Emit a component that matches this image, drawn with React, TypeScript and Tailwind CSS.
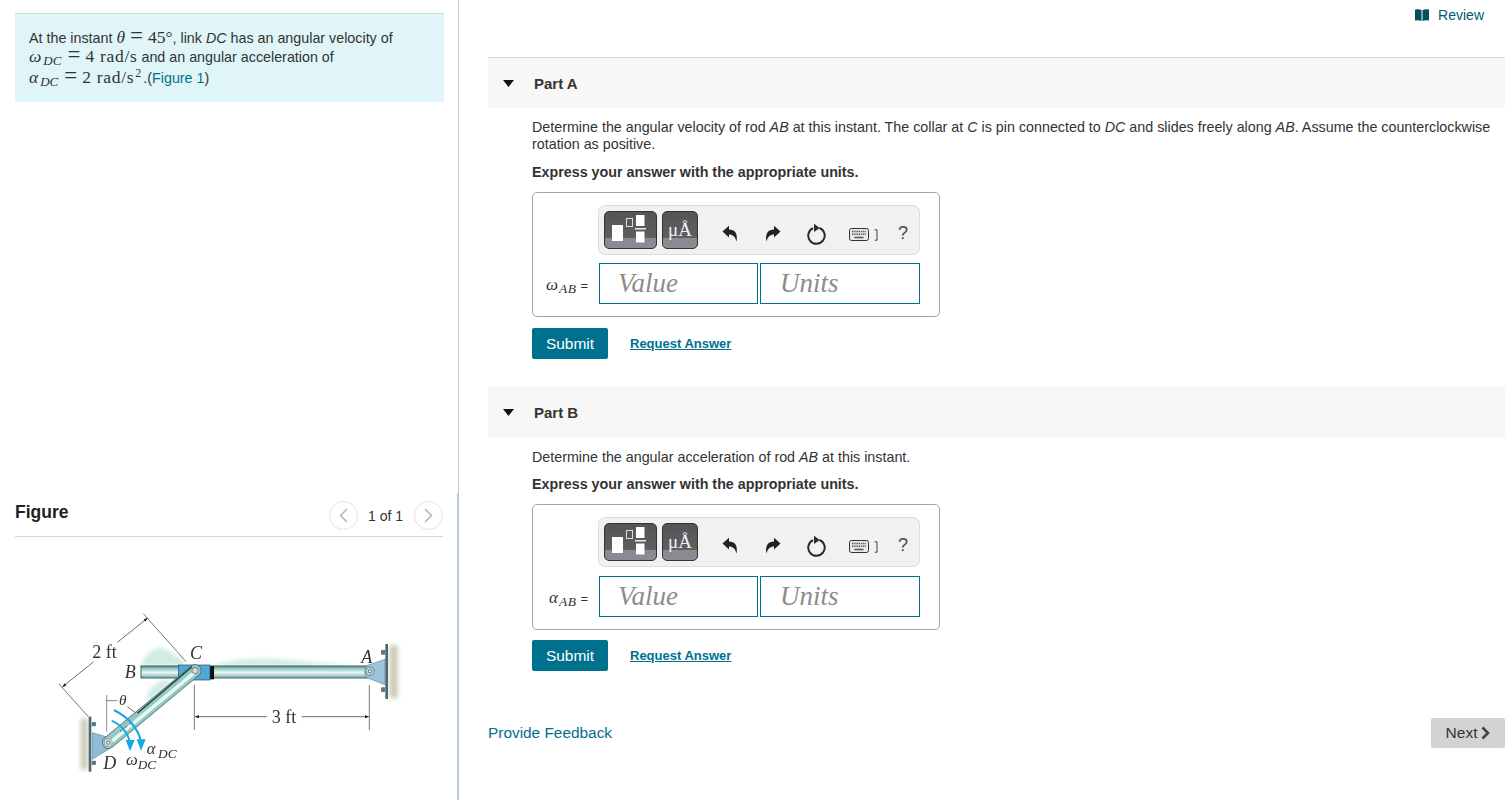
import React from "react";

const sans = "font-['Liberation_Sans',Arial,sans-serif]";
const serif = "font-['Liberation_Serif','Times_New_Roman',serif]";

function M({ children, i, tight }: { children: React.ReactNode; i?: boolean; tight?: boolean }) {
  return <span className={`${serif} text-[17.5px] text-[#333] ${i ? "italic" : tight ? "" : "tracking-[0.7px]"}`}>{children}</span>;
}
function Eq() {
  return <span className={`${serif} text-[23px] text-[#333] mx-[5px] leading-[10px]`}>=</span>;
}
function Sub({ children }: { children: React.ReactNode }) {
  return <span className={`${serif} italic text-[13px] relative top-[3px] ml-[2px] mr-[1px]`}>{children}</span>;
}

function Figure() {
  const t = "Liberation Serif, serif";
  return (
    <svg width="380" height="190" viewBox="0 0 1140 570" className="block">
      <defs>
        <filter id="b6" x="-30%" y="-30%" width="160%" height="160%"><feGaussianBlur stdDeviation="7" /></filter>
        <filter id="b2"><feGaussianBlur stdDeviation="1.5" /></filter>
        <filter id="b1"><feGaussianBlur stdDeviation="0.8" /></filter>
        <linearGradient id="rod" x1="0" y1="0" x2="0" y2="1">
          <stop offset="0" stopColor="#5b9695" />
          <stop offset="0.3" stopColor="#a8d6d3" />
          <stop offset="0.55" stopColor="#eaf6f5" />
          <stop offset="1" stopColor="#74aeab" />
        </linearGradient>
        <marker id="ah" viewBox="0 0 10 10" refX="9" refY="5" markerWidth="18" markerHeight="12" orient="auto-start-reverse" markerUnits="userSpaceOnUse">
          <path d="M0 1 L10 5 L0 9 Z" fill="#222" />
        </marker>
      </defs>
      <g filter="url(#b6)" fill="#d0ebe4">
        <path d="M300 200 Q315 160 355 142 Q400 155 435 190 L430 200 Z" />
        <path d="M510 198 Q600 168 720 178 L960 198 L510 200 Z" />
        <path d="M318 292 Q330 255 378 238 L395 250 L330 300 Z" />
      </g>
      <g filter="url(#b6)" fill="#cfccb8">
        <rect x="1048" y="135" width="26" height="160" rx="10" />
        <rect x="122" y="355" width="22" height="155" rx="10" />
      </g>
      <g filter="url(#b2)">
        <line x1="57" y1="252" x2="145" y2="350" stroke="#333" strokeWidth="2" />
        <line x1="310" y1="41" x2="438" y2="185" stroke="#333" strokeWidth="2" />
        <line x1="68" y1="260" x2="160" y2="186" stroke="#222" strokeWidth="2" markerStart="url(#ah)" />
        <line x1="232" y1="127" x2="322" y2="55" stroke="#222" strokeWidth="2" markerEnd="url(#ah)" />
        <line x1="463" y1="255" x2="463" y2="390" stroke="#333" strokeWidth="2" />
        <line x1="988" y1="255" x2="988" y2="390" stroke="#333" strokeWidth="2" />
        <line x1="466" y1="350" x2="680" y2="350" stroke="#222" strokeWidth="2" markerStart="url(#ah)" />
        <line x1="785" y1="350" x2="986" y2="350" stroke="#222" strokeWidth="2" markerEnd="url(#ah)" />
        <line x1="200" y1="285" x2="200" y2="395" stroke="#555" strokeWidth="2" />
        <line x1="200" y1="302" x2="232" y2="302" stroke="#444" strokeWidth="2" />
        <line x1="262" y1="320" x2="295" y2="345" stroke="#222" strokeWidth="2" />

        <rect x="303" y="198" width="682" height="36" fill="url(#rod)" stroke="#2b4a4a" strokeWidth="2.5" />
        <rect x="510" y="198" width="12" height="40" fill="#111" />
        <rect x="415" y="195" width="95" height="45" fill="#4fa8d8" stroke="#2b4a5a" strokeWidth="2" />

        <path d="M1035 178 L980 197 Q968 214 980 233 L1035 254 Z" fill="#9cc4de" stroke="#4a6a75" strokeWidth="1.5" />
        <rect x="1036" y="132" width="8" height="165" fill="#4a6a73" />
        <rect x="1023" y="150" width="13" height="14" rx="3" fill="#5b7a80" />
        <rect x="1023" y="262" width="13" height="14" rx="3" fill="#5b7a80" />
        <circle cx="990" cy="214" r="13" fill="#b4d3de" stroke="#4a6a75" strokeWidth="2" />
        <circle cx="990" cy="214" r="5" fill="#eee" stroke="#444" strokeWidth="2" />

        <path d="M157 398 L205 412 L218 440 L157 478 Z" fill="#8fbbd9" stroke="#4a6a75" strokeWidth="1.5" />
        <rect x="146" y="350" width="8" height="165" fill="#4a6a73" />
        <rect x="155" y="366" width="13" height="13" rx="3" fill="#5b7a80" />
        <rect x="155" y="482" width="13" height="13" rx="3" fill="#5b7a80" />

        <line x1="205" y1="428" x2="465" y2="212" stroke="#456a69" strokeWidth="38" strokeLinecap="round" />
        <line x1="205" y1="428" x2="465" y2="212" stroke="#93c8c4" strokeWidth="34" strokeLinecap="round" />
        <line x1="205" y1="428" x2="465" y2="212" stroke="#e8f6f4" strokeWidth="11" strokeLinecap="round" transform="translate(2 3)" />
        <line x1="292" y1="340" x2="456" y2="200" stroke="#1f3a3a" strokeWidth="4" />
        <line x1="240" y1="395" x2="278" y2="364" stroke="#555" strokeWidth="3" strokeDasharray="10 8" />
        <circle cx="465" cy="212" r="9" fill="#dcdcdc" stroke="#555" strokeWidth="2" />
        <circle cx="205" cy="428" r="12" fill="#cfe2e6" stroke="#777" strokeWidth="1.5" />
        <circle cx="205" cy="428" r="5" fill="#eee" stroke="#444" strokeWidth="2" />

        <path d="M222 330 Q290 365 303 425" fill="none" stroke="#18a8e3" strokeWidth="6" />
        <path d="M290 418 L317 418 L303 452 Z" fill="#18a8e3" />
        <path d="M215 362 Q258 380 270 425" fill="none" stroke="#18a8e3" strokeWidth="6" />
        <path d="M257 420 L284 420 L270 454 Z" fill="#18a8e3" />
      </g>
      <g fill="#333" fontFamily={t} fontSize="54" filter="url(#b1)">
        <text x="157" y="173">2 ft</text>
        <text x="695" y="368">3 ft</text>
        <text x="254" y="234" fontStyle="italic">B</text>
        <text x="450" y="176" fontStyle="italic">C</text>
        <text x="964" y="188" fontStyle="italic">A</text>
        <text x="190" y="507" fontStyle="italic">D</text>
        <text x="237" y="314" fontStyle="italic" fontSize="46">θ</text>
        <text x="320" y="462" fontStyle="italic" fontSize="50">α</text>
        <text x="354" y="475" fontStyle="italic" fontSize="40">DC</text>
        <text x="258" y="494" fontStyle="italic" fontSize="50">ω</text>
        <text x="293" y="506" fontStyle="italic" fontSize="40">DC</text>
      </g>
    </svg>
  );
}

function TemplatesIcon() {
  return (
    <button className="relative w-[53px] h-[38px] rounded-[5px] border border-[#333] bg-[linear-gradient(#555557_0,#5f5f61_72%,#8b8a92_72%,#8b8a92_100%)]">
      <svg width="53" height="38" viewBox="0 0 53 38" className="absolute left-[-1px] top-[-1px]">
        <rect x="8" y="14" width="11" height="16" fill="#fff" />
        <rect x="22.5" y="7.5" width="6" height="8" fill="none" stroke="#ddd" strokeWidth="1" />
        <rect x="32" y="4" width="8.5" height="11" fill="#fff" />
        <rect x="31" y="17" width="11" height="1.5" fill="#eee" />
        <rect x="32" y="20.5" width="8.5" height="11" fill="#fff" />
      </svg>
    </button>
  );
}

function UnitsIcon() {
  return (
    <button className="relative w-[36px] h-[38px] rounded-[5px] border border-[#333] bg-[linear-gradient(#555557_0,#5f5f61_72%,#8b8a92_72%,#8b8a92_100%)]">
      <span className={`absolute left-0 right-0 top-[5px] text-center text-[#f0f0f0] ${serif} text-[19px] leading-[26px]`}>μÅ</span>
    </button>
  );
}

function Toolbar() {
  return (
    <div className="h-[50px] w-[322px] ml-[65px] rounded-[7px] border border-[#dcdcdc] bg-[#f1f1f1] flex items-center pl-[5px]">
      <TemplatesIcon />
      <div className="w-[5px]" />
      <UnitsIcon />
      <svg width="16" height="18" viewBox="0 0 16 18" className="ml-[24px] mt-[8px]">
        <path d="M0.5 6.5 L7 0.8 V4.4 C12.5 4.4 16 8 14.6 16.5 C13.2 11.6 11 9.4 7 9.4 V12.6 Z" fill="#222" />
      </svg>
      <svg width="16" height="18" viewBox="0 0 16 18" className="ml-[27px] mt-[8px]">
        <path d="M15.5 6.5 L9 0.8 V4.4 C3.5 4.4 0 8 1.4 16.5 C2.8 11.6 5 9.4 9 9.4 V12.6 Z" fill="#222" />
      </svg>
      <svg width="20" height="22" viewBox="0 0 20 22" className="ml-[25px] mt-[7px]">
        <path d="M7 5.2 A8.2 8.2 0 1 0 13.5 5" fill="none" stroke="#2a2a2a" strokeWidth="2" />
        <path d="M8 0.8 L13.8 5 L8 9 Z" fill="#2a2a2a" />
      </svg>
      <svg width="20" height="13" viewBox="0 0 20 13" className="ml-[23px] mt-[8px]">
        <rect x="0.5" y="0.5" width="19" height="12" rx="2" fill="#e9e9e9" stroke="#333" />
        <path d="M3 3.5 H17 M3 6.2 H17" stroke="#555" strokeWidth="1.6" strokeDasharray="1.4 0.8" />
        <path d="M5.5 9.5 H14.5" stroke="#555" strokeWidth="1.6" />
      </svg>
      <svg width="4" height="12" viewBox="0 0 4 12" className="ml-[5px] mt-[9px]">
        <path d="M0.5 0.8 H3 V11.2 H0.5" fill="none" stroke="#444" />
      </svg>
      <span className={`${sans} ml-[20px] mt-[7px] text-[18px] text-[#444]`}>?</span>
    </div>
  );
}

function Part({
  name, q, sym, gapTop, expressMt, boxH, submitMt,
}: { name: string; q: React.ReactNode; sym: string; gapTop: string; expressMt: string; boxH: string; submitMt: string }) {
  return (
    <section>
      <div className="h-[50px] bg-[#f7f7f7] flex items-center pl-[15px]">
        <svg width="11" height="7" viewBox="0 0 11 7"><path d="M0 0 H11 L5.5 7 Z" fill="#111" /></svg>
        <span className="ml-[20px] mt-[2px] text-[15px] font-bold text-[#333]">{name}</span>
      </div>
      <div className="pl-[44px]">
        {q}
        <p className={`${expressMt} h-[17px] leading-[17px] text-[14.3px] font-bold text-[#333]`}>Express your answer with the appropriate units.</p>
        <div className={`mt-[11px] w-[408px] ${boxH} rounded-[5px] border border-[#a3a3a3] pt-[12px]`}>
          <Toolbar />
          <div className={`flex items-center ${gapTop}`}>
            <div className="w-[66px] text-right pr-[11px] pt-[2px] whitespace-nowrap text-[13px] text-[#333]">
              <span className={`${serif} italic text-[17px]`}>{sym}</span>
              <span className={`${serif} italic text-[13.5px] relative top-[3px] ml-[1px] tracking-[0.5px]`}>AB</span>
              <span className="ml-[4px]">=</span>
            </div>
            <div className={`w-[159px] h-[41px] border border-[#00708f] pl-[18px] ${serif} italic text-[27px] leading-[39px] text-[#8c8c8c]`}>Value</div>
            <div className={`w-[160px] h-[41px] ml-[2px] border border-[#00708f] pl-[19px] ${serif} italic text-[27px] leading-[39px] text-[#8c8c8c]`}>Units</div>
          </div>
        </div>
        <div className={`${submitMt} flex items-center`}>
          <button className="w-[76px] h-[31px] rounded-[2px] bg-[#00708f] text-white text-[15.5px]">Submit</button>
          <a className="ml-[22px] text-[13px] font-bold text-[#00708f] underline">Request Answer</a>
        </div>
      </div>
    </section>
  );
}

export default function App() {
  return (
    <div className={`${sans} flex h-[800px] w-[1507px] overflow-hidden bg-white text-[#333]`}>
      <aside className="w-[459px] shrink-0 flex flex-col">
        <div className="h-[493px] border-r border-[#b5cbdc] pt-[13px] pl-[15px] pr-[14px]">
          <div className="h-[89px] border-t border-[#c9dbdf] bg-[#e0f5f7] pl-[14px] pt-[13px] text-[14.3px]">
            <div className="h-[20px] leading-[20px] whitespace-nowrap">
              At the instant <M i>θ</M><Eq /><M tight>45°</M>, link <i>DC</i> has an angular velocity of
            </div>
            <div className="h-[19px] leading-[19px] whitespace-nowrap">
              <M i>ω</M><Sub>DC</Sub><Eq /><M>4 rad/s</M> and an angular acceleration of
            </div>
            <div className="h-[23px] leading-[23px] whitespace-nowrap">
              <M i>α</M><Sub>DC</Sub><Eq /><M>2 rad/s</M><span className={`${serif} text-[12px] relative -top-[6px] ml-px mr-[2px]`}>2</span>.(<a className="text-[#00708f]">Figure 1</a>)
            </div>
          </div>
        </div>
        <div className="flex-1 border-r-2 border-[#b5cbdc] pl-[15px] pr-[14px]">
          <div className="h-[44px] border-b border-[#d5d5d5] flex items-center justify-between">
            <span className="font-bold text-[17.5px] text-[#222] -mt-[4px]">Figure</span>
            <div className="flex items-center text-[14px] text-[#333] mt-[1px]">
              <span className="w-[29px] h-[29px] rounded-full border border-[#e3e3e3] flex items-center justify-center">
                <svg width="9" height="15" viewBox="0 0 9 15"><path d="M8 1 L1.5 7.5 L8 14" fill="none" stroke="#b5b5b5" strokeWidth="1.5" /></svg>
              </span>
              <span className="ml-[10px] mr-[11px] mt-[2px]">1 of 1</span>
              <span className="w-[29px] h-[29px] rounded-full border border-[#e3e3e3] flex items-center justify-center">
                <svg width="9" height="15" viewBox="0 0 9 15"><path d="M1 1 L7.5 7.5 L1 14" fill="none" stroke="#b5b5b5" strokeWidth="1.5" /></svg>
              </span>
            </div>
          </div>
          <div className="mt-[63px] ml-[25px]"><Figure /></div>
        </div>
      </aside>

      <main className="flex-1 pl-[29px] pr-[2px]">
        <div className="h-[58px] border-b border-[#d9d9d9] flex justify-end items-start pt-[6px] pr-[21px] text-[14px] text-[#005a70]">
          <a className="flex items-center h-[18px]">
            <svg width="14" height="12" viewBox="0 0 14 12" className="mr-[9px]">
              <path d="M0 0.5 Q3.5 -0.3 6.5 1 V12 Q3.5 10.8 0 11.5 Z M7.5 1 Q10.5 -0.3 14 0.5 V11.5 Q10.5 10.8 7.5 12 Z" fill="#04505f" />
            </svg>
            Review
          </a>
        </div>
        <Part
          name="Part A"
          sym="ω"
          gapTop="mt-[8px]"
          expressMt="mt-[11px]"
          boxH="h-[125px]"
          submitMt="mt-[11px]"
          q={
            <p className="pt-[11px] text-[14.3px] leading-[17px] text-[#333]">
              Determine the angular velocity of rod <i>AB</i> at this instant. The collar at <i>C</i> is pin connected to <i>DC</i> and slides freely along <i>AB</i>. Assume the counterclockwise rotation as positive.
            </p>
          }
        />
        <div className="h-[28px]" />
        <Part
          name="Part B"
          sym="α"
          gapTop="mt-[9px]"
          expressMt="mt-[10px]"
          boxH="h-[126px]"
          submitMt="mt-[10px]"
          q={
            <p className="pt-[12px] text-[14.3px] leading-[17px] text-[#333]">
              Determine the angular acceleration of rod <i>AB</i> at this instant.
            </p>
          }
        />
        <div className="mt-[47px] flex items-center justify-between">
          <a className="text-[15.4px] text-[#00708f]">Provide Feedback</a>
          <button className="w-[74px] h-[30px] rounded-[2px] bg-[#d3d3d3] flex items-center justify-center text-[15.5px] text-[#333]">
            Next
            <svg width="9" height="14" viewBox="0 0 9 14" className="ml-[4px]"><path d="M1.5 1.5 L7 7 L1.5 12.5" fill="none" stroke="#444" strokeWidth="2.6" /></svg>
          </button>
        </div>
      </main>
    </div>
  );
}
